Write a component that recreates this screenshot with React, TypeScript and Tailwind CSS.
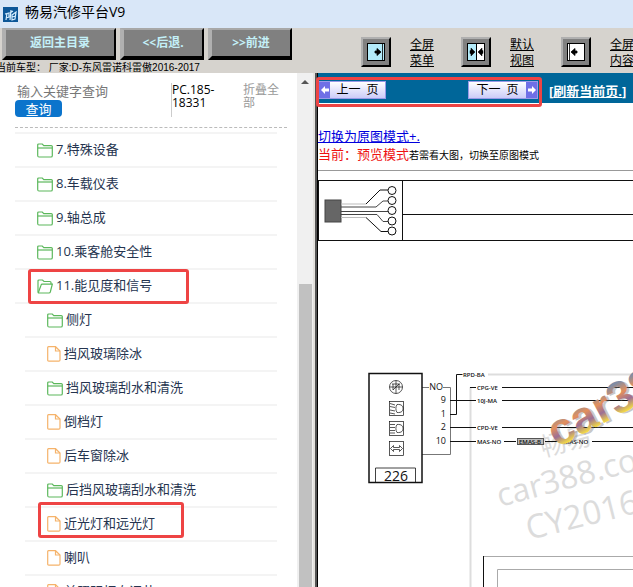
import React from 'react';

interface TreeItem {
  label: string;
  icon: 'folder' | 'open' | 'file';
  level: 1 | 2;
  mark?: string;
}

const items: TreeItem[] = [
  { label: '7.特殊设备', icon: 'folder', level: 1 },
  { label: '8.车载仪表', icon: 'folder', level: 1 },
  { label: '9.轴总成', icon: 'folder', level: 1 },
  { label: '10.乘客舱安全性', icon: 'folder', level: 1 },
  { label: '11.能见度和信号', icon: 'open', level: 1, mark: 'left-[13px] -top-px w-[161px] h-[35px]' },
  { label: '侧灯', icon: 'folder', level: 2 },
  { label: '挡风玻璃除冰', icon: 'file', level: 2 },
  { label: '挡风玻璃刮水和清洗', icon: 'folder', level: 2 },
  { label: '倒档灯', icon: 'file', level: 2 },
  { label: '后车窗除冰', icon: 'file', level: 2 },
  { label: '后挡风玻璃刮水和清洗', icon: 'folder', level: 2 },
  { label: '近光灯和远光灯', icon: 'file', level: 2, mark: 'left-[13px] -top-[6px] w-[146px] h-[36px]' },
  { label: '喇叭', icon: 'file', level: 2 },
  { label: '前照明灯自调节', icon: 'file', level: 2 },
];

const TreeIcon: React.FC<{ icon: TreeItem['icon'] }> = ({ icon }) => {
  if (icon === 'file') {
    return (
      <svg className="w-[14px] h-4 shrink-0" viewBox="0 0 14 16" fill="none" stroke="#f5b36b" strokeWidth="1.2">
        <path d="M1.5.7h7L13 5v9q0 1.200-1.200 1.200H1.800Q.7 15.200.7 14V1.700Q.7.7 1.500.7z" />
        <path d="M8.500.7V5H13" />
      </svg>
    );
  }
  return (
    <svg className="w-4 h-[15px] shrink-0" viewBox="0 0 16 15" fill="none" stroke="#5cb85c" strokeWidth="1.2">
      {icon === 'open' ? (
        <>
          <path d="M1 13.500V2q0-1 1-1h3.500l1.500 1.500h6q1 0 1 1V5" />
          <path d="M1.300 13.800L4 6.200q.3-1 1.300-1h10L13.300 13q-.3 1-1.300 1H1.500z" />
        </>
      ) : (
        <>
          <path d="M.7 12.500V2q0-1 1-1h3.600l1.500 1.600h7.500q1 0 1 1v9.100q0 1.300-1.300 1.300H2q-1.300 0-1.300-1.500z" />
          <path d="M.7 5h14.600" />
        </>
      )}
    </svg>
  );
};

const viewModes = [
  { lines: ['全屏', '菜单'], mode: 'menu' },
  { lines: ['默认', '视图'], mode: 'split' },
  { lines: ['全屏', '内容'], mode: 'content' },
];

const ModeIcon: React.FC<{ mode: string }> = ({ mode }) => (
  <svg className="w-[18px] h-[18px]" viewBox="0 0 18 18" stroke="#000">
    <rect x="0.5" y="0.500" width="17" height="17" fill={mode === 'content' ? '#fff' : '#b4ebfa'} />
    {mode === 'menu' && <path d="M15.500 1v16M8 8h2V5.500l4 3.500-4 3.500V10H8z" strokeWidth="0.800" />}
    {mode === 'split' && (
      <>
        <rect x="9.500" y="0.500" width="8" height="17" fill="#fff" />
        <path d="M3 7.500h1V5l4 4-4 4v-2.500H3zM16 7.500h-1V5l-4 4 4 4v-2.500h1z" fill="#000" strokeWidth="0.500" />
      </>
    )}
    {mode === 'content' && <path d="M2.500 1v16M10 8H8V5.500L4 9l4 3.500V10h2z" strokeWidth="0.800" />}
  </svg>
);

const Arrow: React.FC<{ flip?: boolean }> = ({ flip }) => (
  <span className="w-[11px] h-full bg-[#6f6fe6] flex items-center justify-center">
    <svg className="w-2 h-2" viewBox="0 0 8 8" fill="#fff">
      <path d={flip ? 'M8 4L4 0v2.500H0v3h4V8z' : 'M0 4l4-4v2.500h4v3H4V8z'} />
    </svg>
  </span>
);

const Diagram: React.FC = () => (
  <svg className="block w-full flex-1 min-h-0 font-['Open_Sans','Noto_Sans_CJK_SC',sans-serif]" fill="none" stroke="#111">
    <defs>
      <linearGradient id="brand" gradientUnits="userSpaceOnUse" x1="0" y1="-30" x2="0" y2="1">
        <stop offset="0" stopColor="#7d8ca6" />
        <stop offset="0.35" stopColor="#e3905c" />
        <stop offset="0.65" stopColor="#9c6f94" />
        <stop offset="1" stopColor="#ffe93b" />
      </linearGradient>
    </defs>

    {/* Connector overview */}
    <path d="M0 9.500h3000M0 69.500h3000M84.500 43.500h3000M.5 9v61M84.500 9v61" />
    <rect x="7" y="29" width="16" height="22" fill="#666" stroke="#444" />
    <path d="M23 33h25M23 46.500h25" stroke="#bbb" />
    <path d="M23 36h35l7-6h5M23 40.500h47M23 43.500h36l6 7h5" stroke="#444" />
    <path d="M48 33l14-14h8M48 46.500l15 14h7" />
    {[19.5, 29.5, 39.5, 50, 60].map((y) => (
      <circle key={y} cx="74" cy={y} r="4" fill="#fff" />
    ))}

    {/* Watermark */}
    <g fill="#dcdcdc" stroke="none">
      <text transform="translate(225 286) rotate(-15)" fontSize="26">畅易</text>
      <text transform="translate(182 336) rotate(-15)" fontSize="32">car388.com</text>
      <text transform="translate(211 369) rotate(-14)" fontSize="33">CY2016</text>
    </g>

    {/* Wires */}
    <path d="M170 203.500h3000M152.500 700V216" stroke="#ddd" strokeWidth="2" />
    <path d="M104 216.500h7M125 216.500h7.500v67H104" stroke="#777" />
    <path d="M132 243.500h6.500v-40h6M152 216.500h6M184 216.500h3000M132 229.500h26M184 229.500h3000M132 256.500h26M184 256.500h3000M132 270.500h26M186 270.500h12M227 270.500h18M274 270.500h3000" />
    <path d="M165 385.500h3000M179.500 700V398.500h3000" stroke="#aaa" />
    <path d="M165.500 385v400" />
    <rect x="199.500" y="267.500" width="26" height="6" fill="#bbb" stroke="#555" />
    <g fill="#111" stroke="none" fontSize="6" fontWeight="600">
      <text x="145" y="206">RPD-BA</text>
      <text x="159" y="219">CPG-VE</text>
      <text x="159" y="232">10J-MA</text>
      <text x="159" y="259">CPD-VE</text>
      <text x="159" y="273">MAS-NO</text>
      <text x="201" y="273">EMAS-B</text>
      <text x="246" y="273">MAS-NO</text>
    </g>

    {/* Unit 226 */}
    <rect x="51" y="202.500" width="53" height="109" strokeWidth="1.500" />
    <path d="M57.500 311v-14h40v14" strokeWidth="0.800" />
    <g fill="#111" stroke="none" fontSize="9" textAnchor="end">
      <text x="125" y="219">NO</text>
      <text x="128" y="232">9</text>
      <text x="128" y="246">1</text>
      <text x="128" y="259">2</text>
      <text x="128" y="273">10</text>
    </g>
    <text x="78" y="310" fontSize="14" fontWeight="500" textAnchor="middle" fill="#111" stroke="none">226</text>
    <g strokeWidth="0.700">
      <circle cx="78" cy="216" r="6.500" />
      <path d="M71.500 216h13M78 209.500v13M74 213h8M75 219l6-6M75 213v6M81 213v6" />
      <rect x="71.500" y="230.500" width="14" height="14" />
      <path d="M79 233.500c5-.5 6 2 6 4s-1 4.500-6 4c-1.500-2-1.500-6 0-8zM72 232.500l5 1.500M72 235.500l5 1M72 239l5 1M72 242l5 1" />
      <rect x="71.500" y="250.500" width="14" height="14" />
      <path d="M79 253.500c5-.5 6 2 6 4s-1 4.500-6 4c-1.500-2-1.500-6 0-8zM72 253.500h5M72 256.500h5M72 259.500h5M72 262h5" />
      <rect x="71.500" y="270.500" width="14" height="14" />
      <path d="M72.500 277.500l3-3v2h6v-2l3 3-3 3v-2h-6v2z" />
    </g>

    <g transform="translate(239 277) rotate(-28)" stroke="none" fontSize="45" fontWeight="700" className="font-['Liberation_Sans',sans-serif]">
      <text x="2" y="2" fill="#777" opacity="0.4">car388</text>
      <text fill="url(#brand)">car388</text>
    </g>
  </svg>
);

const navButton =
  'h-8 bg-[#808080] border-t-2 border-l-4 border-r-2 border-b-4 border-t-[#a8a8a8] border-l-[#b0b0b0] border-r-black border-b-black text-[#c4f0f8] font-bold text-xs';

const App: React.FC = () => {
  return (
    <div className="h-screen overflow-hidden flex flex-col bg-white text-black font-['Open_Sans','Noto_Sans_CJK_SC',sans-serif]">
      <header className="h-7 shrink-0 bg-[#d9e7f8] flex items-center gap-[7px] pl-[3px] pb-1">
        <svg className="w-[15px] h-[15px] mt-1" viewBox="0 0 15 15">
          <rect width="15" height="15" fill="#0d5798" />
          <path d="M3 13L4 6M2 7l4-1v4l-3 1M8 3L7 13M7 6l3-2M9 8l4-3-1 7-3 1zM9 10l4-1" stroke="#d8efff" strokeWidth="1.200" fill="none" />
        </svg>
        <h1 className="text-sm leading-6">畅易汽修平台V9</h1>
      </header>

      <div className="h-[45px] shrink-0 bg-[#d6d3ce] flex overflow-hidden">
        <div className="w-[361px] shrink-0">
          <div className="flex gap-1 pl-0.5">
            <button className={`${navButton} w-[114px]`}>返回主目录</button>
            <button className={`${navButton} w-[84px]`}>&lt;&lt;后退.</button>
            <button className={`${navButton} w-[84px]`}>&gt;&gt;前进</button>
          </div>
          <p className="-ml-1 mt-0.5 text-[10px] leading-3 whitespace-nowrap font-['Liberation_Sans','Noto_Sans_CJK_SC',sans-serif]">
            当前车型： 厂家:D-东风雷诺科雷傲2016-2017
          </p>
        </div>
        <div className="flex pt-[9px]">
          {viewModes.map(({ lines, mode }) => (
            <div key={mode} className="w-[100px] shrink-0 flex items-start gap-[19px]">
              <button
                aria-label={lines.join('')}
                className="w-[30px] h-[30px] flex items-center justify-center bg-[#808080] border-2 border-t-[#b0b0b0] border-l-[#b0b0b0] border-r-black border-b-black"
              >
                <ModeIcon mode={mode} />
              </button>
              <a href="#" className="text-xs leading-4 underline">
                {lines[0]}
                <br />
                {lines[1]}
              </a>
            </div>
          ))}
        </div>
      </div>

      <div className="flex-1 min-h-0 flex">
        <aside className="w-[297px] shrink-0 pl-[15px] overflow-hidden">
          <div className="h-[55px] w-[272px] pt-[10px] flex border-b border-dashed border-[#bbb]">
            <div className="w-[156px]">
              <input
                aria-label="关键字"
                placeholder="输入关键字查询"
                className="block w-[140px] h-4 mb-px pl-0.5 text-[13px] leading-4 placeholder:text-[#777] outline-none"
              />
              <button className="block w-[47px] h-[17px] rounded bg-[#0b74cc] text-white text-[13px] leading-4">查询</button>
            </div>
            <div className="w-[72px] h-[34px] border-l border-[#ccc] text-xs leading-[13px]">
              PC.185-
              <br />
              18331
            </div>
            <a href="#" className="w-10 text-xs leading-[13px] text-[#999]">
              折叠全部
            </a>
          </div>

          <ul className="w-[262px] mt-1 border-t-2 border-[#f4f4f4]">
            {items.map((item) => (
              <li
                key={item.label}
                className={`relative h-[34px] flex items-center border-b-2 border-[#f4f4f4] pl-[22px] text-[13px] text-[#25344f] whitespace-nowrap ${
                  item.level === 2 ? 'ml-[10px]' : ''
                } ${item.icon === 'file' ? 'gap-[3px]' : 'gap-[3px]'}`}
              >
                <TreeIcon icon={item.icon} />
                <a href="#">{item.label}</a>
                {item.mark && (
                  <span className={`absolute border-[3px] border-[#ee4444] rounded-[3px] pointer-events-none ${item.mark}`} />
                )}
              </li>
            ))}
          </ul>
        </aside>

        {/* Scrollbar */}
        <div className="w-4 shrink-0 bg-[#f0f0f0] flex flex-col items-center pt-[7px]">
          <svg className="w-2 h-1 shrink-0" viewBox="0 0 8 4" fill="#555">
            <path d="M0 4l4-4 4 4z" />
          </svg>
          <div className="mt-[200px] w-[13px] flex-1 bg-[#c1c1c1]" />
        </div>
        <div className="w-[5px] shrink-0 bg-[#555] border-l-2 border-l-[#e4e2de] border-r border-r-black" />

        <main className="flex-1 min-w-0 flex flex-col">
          <div className="relative h-[30px] shrink-0 bg-[#006699] flex items-start pt-2 whitespace-nowrap">
            <button className="w-[68px] h-[18px] flex items-center border border-[#9a9ae8] bg-gradient-to-b from-white to-[#ccccf8] text-xs leading-4">
              <Arrow />
              <span className="flex-1">上一&nbsp; 页</span>
            </button>
            <button className="ml-[82px] w-[70px] h-[18px] flex items-center border border-[#9a9ae8] bg-gradient-to-b from-white to-[#ccccf8] text-xs leading-4">
              <span className="flex-1">下一&nbsp; 页</span>
              <Arrow flip />
            </button>
            <a href="#" className="ml-[11px] text-[13px] leading-5 font-bold text-white">
              [<span className="underline">刷新当前页.</span>]
            </a>
            <span className="absolute -left-0.5 top-1 w-[226px] h-[30px] border-[3px] border-[#ee4444] rounded-[3px] pointer-events-none" />
          </div>

          <div className="pt-6 h-[67px] shrink-0 text-[13px] leading-[18px] whitespace-nowrap overflow-hidden">
            <a href="#" className="text-[#0000dd] underline">
              切换为原图模式+.
            </a>
            <p className="text-[#ee1111]">
              当前：预览模式<span className="text-[10px] text-black">若需看大图，切换至原图模式</span>
            </p>
          </div>
          <hr className="border-[#999] shrink-0" />
          <Diagram />
        </main>
      </div>
    </div>
  );
};

export default App;
